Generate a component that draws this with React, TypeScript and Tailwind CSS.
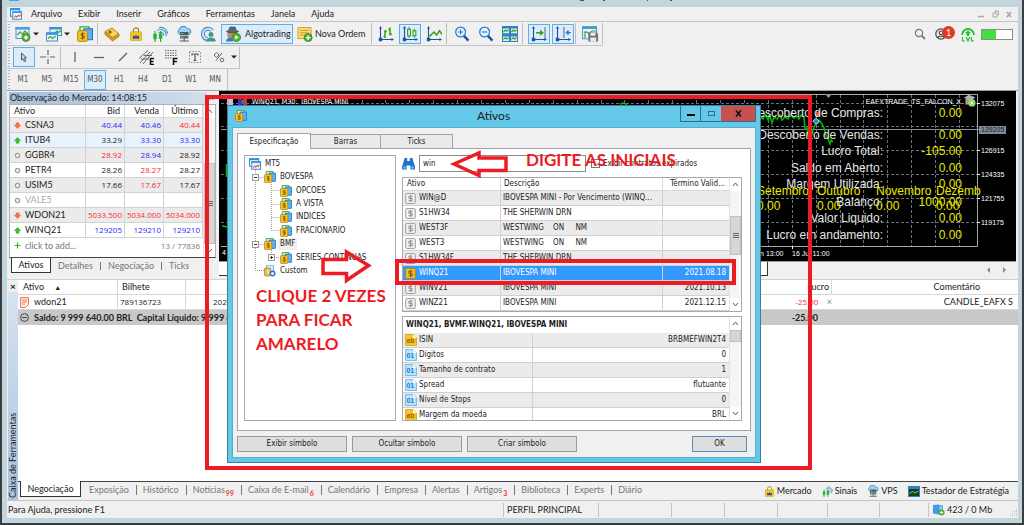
import React from "react";

type P = { children?: React.ReactNode; size?: string };

function Svg({ children, size }: P) {
  return (
    <svg viewBox="0 0 16 16" className={size ?? "size-4 shrink-0"} fill="none" aria-hidden="true">
      {children}
    </svg>
  );
}

/* ---------- icons ---------- */

const AppIcon = ({ size }: P) => (
  <Svg size={size}>
    <rect x="0.7" y="1" width="12" height="10" fill="#fff" stroke="#2f8fdc" strokeWidth="1.4" />
    <rect x="0" y="0.4" width="13.4" height="2.6" fill="#2f8fdc" />
    <rect x="3.7" y="5" width="11.6" height="10" fill="#fff" stroke="#2f8fdc" strokeWidth="1.4" />
    <rect x="3" y="4.4" width="13" height="2.4" fill="#3b9ae4" />
    <path d="M5.5 13l2-2.6 1.6 1.8 2-2.4 1.4 1.4 1.4-2.4" stroke="#ef5a3c" strokeWidth="1.5" />
  </Svg>
);
const Plus = ({ x, y }: { x: number; y: number }) => (
  <g>
    <circle cx={x} cy={y} r="4" fill="#4fae2c" stroke="#2f7d17" strokeWidth="0.7" />
    <path d={`M${x - 2.3} ${y}h4.6M${x} ${y - 2.3}v4.6`} stroke="#fff" strokeWidth="1.4" />
  </g>
);
const ChartPlus = () => (
  <Svg>
    <rect x="1" y="1.5" width="13" height="11" fill="#e3f1fc" stroke="#4a9ade" />
    <rect x="0.5" y="1" width="14" height="2.6" fill="#4a9ade" />
    <path d="M2 9l3-3 2.4 2L10 5l3 3" stroke="#5ba843" strokeWidth="1.3" />
    <Plus x={11} y={11.5} />
  </Svg>
);
const Windows = () => (
  <Svg>
    <rect x="4" y="1.5" width="11.5" height="8" fill="#dceefb" stroke="#3d8fd8" />
    <rect x="3.5" y="1" width="12.5" height="2.4" fill="#3d8fd8" />
    <path d="M9 7l2-2 1.5 1.5L15 4.6" stroke="#4fa23a" strokeWidth="1.2" />
    <rect x="0.5" y="7" width="11" height="8" fill="#e5f3fc" stroke="#3d8fd8" />
    <rect x="0" y="6.4" width="12" height="2.4" fill="#3d8fd8" />
    <path d="M2 12.5l2.5-2 2 2L10 10" stroke="#4fa23a" strokeWidth="1.3" />
  </Svg>
);
const Coins = ({ size }: P) => (
  <Svg size={size}>
    <rect x="3" y="0.8" width="9" height="10" fill="#e9f7df" stroke="#4fa83a" strokeWidth="1.3" />
    <rect x="6.5" y="2.8" width="9" height="11" rx="0.6" fill="#5bb1f0" stroke="#1f71c4" strokeWidth="1.1" />
    <rect x="0.7" y="4.7" width="9.6" height="10.6" rx="1" fill="#f5c62f" stroke="#b98408" />
    <path d="M7.6 7.6H4.4v2.2h2.8v2.4H3.6M5.6 6.3v7.4" stroke="#7d5800" strokeWidth="1" />
  </Svg>
);
const CustomIcon = ({ size }: P) => (
  <Svg size={size}>
    <rect x="3.5" y="0.8" width="9" height="9" fill="#dbeefc" stroke="#62a9dd" />
    <rect x="0.7" y="4" width="8" height="10.6" rx="1" fill="#e5bd55" stroke="#a9812a" />
    <path d="M5.5 6.2v6M4 8h3M4 10.4h3" stroke="#fff3c4" />
    <circle cx="11.4" cy="11.2" r="3" fill="#fff" stroke="#3272c8" strokeWidth="2" />
  </Svg>
);
const Tag = () => (
  <Svg>
    <path d="M1 5.5L8 2l7 6-6.500 4z" fill="#f5cd52" stroke="#b98a17" />
    <path d="M1 5.500v3L8.500 15l6.500-4.500V8l-6.500 4z" fill="#dd9f24" stroke="#a87513" strokeWidth="0.8" />
    <circle cx="6" cy="6" r="1.6" fill="#7c5a0c" />
    <path d="M7.600 8.600l3.400-2" stroke="#fff2b8" />
  </Svg>
);
const Bag = ({ size }: P) => (
  <Svg size={size}>
    <path d="M5 6V4a3 3 0 016 0v2" stroke="#9b8331" strokeWidth="1.3" />
    <rect x="1.8" y="5.4" width="12.4" height="10" rx="0.8" fill="#f8c521" stroke="#c89a12" strokeWidth="0.7" />
    <path d="M4.5 13.4V9.2l2 1.6 1.5-2 1.5 2 2-1.6v4.2z" fill="#2456a8" />
  </Svg>
);
const Signal = ({ size }: P) => (
  <Svg size={size}>
    <path d="M5 4.6a5.6 5.6 0 019 5.6M7 1.6a7 7 0 018.6 6M6.6 7a3 3 0 015 2.6" stroke="#3f95da" strokeWidth="1.1" />
    <path d="M3 5v11M8.6 5v11" stroke="#23962a" />
    <rect x="1.2" y="7.4" width="3.6" height="6" rx="1" fill="#2cb634" />
    <rect x="6.8" y="7.4" width="3.6" height="5.6" rx="1" fill="#2cb634" />
  </Svg>
);
const Cloud = ({ size }: P) => (
  <Svg size={size}>
    <path d="M3.6 8.4A3 3 0 013 3.6 4.6 4.6 0 0111.4 2.6a3 3 0 011.4 5.8z" fill="#9fd1f5" stroke="#3584c9" />
    <rect x="4" y="6" width="8.4" height="3" fill="#4d5a5f" />
    <rect x="4" y="9.6" width="8.4" height="3" fill="#5e6d70" />
    <path d="M5.2 7.5h2M5.2 11.1h2" stroke="#6ee06a" />
    <path d="M8.2 12.6v2M3.6 15h9.2" stroke="#4d5a5f" strokeWidth="1.2" />
  </Svg>
);
const Community = () => (
  <Svg>
    <path d="M7.6 14.6A6.6 6.6 0 1113.4 4M7.6 11.6A3.8 3.8 0 1111 5.4" stroke="#3f95da" strokeWidth="1.2" />
    <circle cx="11" cy="8.4" r="2.5" fill="#3c9a94" />
    <path d="M6.2 15.6c0-3 2-4.2 4.8-4.2s4.8 1.2 4.8 4.2z" fill="#3c9a94" />
  </Svg>
);
const Algo = ({ size }: P) => (
  <Svg size={size}>
    <path d="M2.400 7c0-1.500 1-2 4.400-2s5 .5 5 2v3.800c-1.600 2.200-7.600 2.200-9.400 0z" fill="#b58f6c" />
    <path d="M3.600 4.600L4.800 1h5.400l1.200 3.600 2.400.8c-1.600 1.800-10.800 1.800-12.600 0z" fill="#5d666b" stroke="#30373b" strokeWidth="0.5" />
    <path d="M1 15.400c.6-2.800 2.200-3.800 5.400-3.800l2 3.800z" fill="#3a78bd" />
    <circle cx="11.4" cy="11.4" r="4.2" fill="#52b72c" stroke="#2b7d12" strokeWidth="0.7" />
    <path d="M10.2 9.2v4.4l3.4-2.2z" fill="#fff" />
  </Svg>
);
const Note = () => (
  <Svg>
    <path d="M1 1.6h13v8l-3 3H1z" fill="#fae07c" stroke="#c9a12c" />
    <path d="M3 4.4h9M3 6.8h9M3 9.2h5" stroke="#c79c27" />
    <Plus x={11.2} y={11.6} />
  </Svg>
);
const Axes = () => (
  <>
    <path d="M2.5 1v13M1 13.5h13.4" stroke="#1c4fa8" strokeWidth="1.1" />
    <path d="M2.5 0L4 2.6H1zM16 13.5l-2.6 1.6v-3.2zM.8 11.8h3.4v3.4H.8z" fill="#1c4fa8" />
  </>
);
const Bars = () => (
  <Svg>
    <Axes />
    <path d="M7 4v8M5.4 10.4H7M7 5.4h2M12 1.6v8M10.2 3.4H12M12 8h2" stroke="#35a11b" strokeWidth="1.5" />
  </Svg>
);
const Candles = () => (
  <Svg>
    <Axes />
    <path d="M7 1v11M12.4 2.6v9" stroke="#35a11b" />
    <rect x="5.6" y="3.2" width="2.8" height="6.6" fill="#dff0ff" stroke="#35a11b" strokeWidth="1.1" />
    <rect x="11" y="4.8" width="2.8" height="5" fill="#dff0ff" stroke="#35a11b" strokeWidth="1.1" />
  </Svg>
);
const LineChart = () => (
  <Svg>
    <Axes />
    <path d="M3.5 10.4L8 6l2.6 3 3-4.4L16 8.6" stroke="#35a11b" strokeWidth="1.5" />
  </Svg>
);
const Zoom = ({ plus }: { plus?: boolean }) => (
  <Svg>
    <path d="M9.6 9.4l4.8 5.2" stroke="#1d4da0" strokeWidth="2.4" />
    <circle cx="6.6" cy="6" r="4.9" fill="#e4f2fd" stroke="#2b7ed2" strokeWidth="1.3" />
    <path d={plus ? "M4 6h5.2M6.6 3.4v5.2" : "M4 6h5.2"} stroke="#2b7ed2" strokeWidth="1.2" />
  </Svg>
);
const Tile = () => (
  <Svg>
    <rect width="16" height="16" fill="#2f82d0" />
    <path d="M1 2.6h6v4.6H1zM9 2.6h6v4.6H9zM1 10.4h6V15H1zM9 10.4h6V15H9z" fill="#dff3d4" />
    <path d="M1.4 6l2-2 1.4 1.2L6.6 4M9.4 6l2-2 1.4 1.2L14.6 4M1.4 13.4l2-1.6 1.4 1.2 1.8-1.2M9.4 13.4l2-1.6 1.4 1.2 1.8-1.2" stroke="#35982a" strokeWidth="1.1" />
  </Svg>
);
const AutoScroll = () => (
  <Svg>
    <Axes />
    <path d="M14 1v12" stroke="#5b6b78" />
    <path d="M5 6.8h5" stroke="#35a11b" strokeWidth="1.6" />
    <path d="M9 3.8l4 3-4 3z" fill="#35a11b" />
  </Svg>
);
const Shift = () => (
  <Svg>
    <Axes />
    <path d="M9 1v11" stroke="#5b6b78" />
    <path d="M12.6 6.6H16M13 4.4v4.4" stroke="#2b7ed2" strokeWidth="1.3" />
    <path d="M10.4 6.6l3-2.6v5.2z" fill="#2b7ed2" />
  </Svg>
);
const Template = () => (
  <Svg>
    <rect x="0.6" y="0.8" width="14" height="12" fill="#e6f3fc" stroke="#4a96d4" />
    <rect x="0.6" y="0.4" width="14.4" height="2.6" fill="#4a96d4" />
    <path d="M3 12V5M2 7l3-1 2 2 3-3 4 0" stroke="#4fa23a" strokeWidth="1.2" />
    <path d="M6.4 6.4h8L16 8v7.6H6.4z" fill="#6b7277" />
    <path d="M8.4 6.8h5v3h-5zM8.2 11.6h6v4h-6z" fill="#e9ecee" />
  </Svg>
);
const Caret = () => (
  <svg viewBox="0 0 6 4" className="h-1 w-1.5 shrink-0" aria-hidden="true">
    <path d="M0 .4h6L3 3.6z" fill="#222" />
  </svg>
);
const Dollar = ({ on }: { on?: boolean }) => (
  <Svg size="size-[11px] shrink-0">
    <rect x="1" y="0.8" width="14" height="14.4" rx="1.4" fill={on ? "#f5c02c" : "#f1f1f1"} stroke={on ? "#b8860b" : "#9a9a9a"} strokeWidth="1.4" />
    <path d="M11 4.6H5.6v3.2h5v3.4H5M8.2 2.8v10.4" stroke={on ? "#6f4e00" : "#8b8b8b"} strokeWidth="1.3" />
  </Svg>
);
const Binoculars = () => (
  <svg viewBox="0 0 13 13" className="h-[13px] w-[13px] shrink-0" aria-hidden="true">
    <path d="M2.600 1h2.600v3h2.600V1h2.600l.8 3L13 9.600V12.500H8.400V8.400H4.600v4.100H0V9.600L1.800 4z" fill="#1f74c6" />
    <path d="M1.400 9.600h2v2h-2zM9.600 9.600h2v2h-2z" fill="#8ac8f5" />
  </svg>
);
const FileTag = ({ text }: { text: "ab" | "01" }) => (
  <svg viewBox="0 0 13 13" className="h-3 w-3 shrink-0" aria-hidden="true">
    <path d="M.6.6h8.2l3.6 3.6v8.2H.6z" fill={text === "ab" ? "#f7c52b" : "#bfe3fa"} stroke={text === "ab" ? "#dba917" : "#6ab7ec"} />
    <path d="M8.8.6v3.6h3.6z" fill="#fff" />
    <text x="1.6" y="9.6" fontSize="7.5" fontWeight="700" fontFamily="Liberation Sans, sans-serif" fill={text === "ab" ? "#9a6a00" : "#1c7fd0"}>
      {text}
    </text>
  </svg>
);
const Arrow = ({ kind }: { kind: "up" | "down" | "none" }) => (
  <svg viewBox="0 0 8 8" className="mx-1 size-[7px] shrink-0" aria-hidden="true">
    {kind === "up" && <path d="M4 .5l3.500 3.700H5.600V7H2.400V4.200H.5z" fill="#3cc428" stroke="#26a312" strokeWidth="0.6" />}
    {kind === "down" && <path d="M4 7.500l3.500-3.700H5.600V1H2.400v2.800H.5z" fill="#f7734c" stroke="#e8502a" strokeWidth="0.6" />}
    {kind === "none" && <circle cx="4" cy="4" r="2.4" fill="#fff" stroke="#9a9a9a" strokeWidth="1.4" />}
  </svg>
);

/* ---------- toolbars ---------- */

const Sep = ({ cls }: { cls?: string }) => <div className={`h-[21px] w-px shrink-0 bg-[#bdbdbd] ${cls ?? ""}`} />;

const Grip = ({ cls }: { cls?: string }) => (
  <svg className={`h-[19px] w-1 shrink-0 ${cls ?? ""}`} aria-hidden="true">
    <path d="M2 0v19" stroke="#b4b4b4" strokeWidth="2" strokeDasharray="1 2" />
  </svg>
);

function Tool({ label, active, children }: { label: string; active?: boolean; children: React.ReactNode }) {
  return (
    <button
      aria-label={label}
      className={
        active
          ? "mx-px flex h-5 w-[22px] shrink-0 items-center justify-center border border-[#5bb0e8] bg-[#dcecfa]"
          : "mx-px flex h-5 w-[22px] shrink-0 items-center justify-center"
      }
    >
      {children}
    </button>
  );
}

function MenuBar() {
  const items = ["Arquivo", "Exibir", "Inserir", "Gráficos", "Ferramentas", "Janela", "Ajuda"];
  return (
    <nav className="flex h-[15px] items-center border-b border-[#c4c4c4] pr-[6px] pl-[3px]">
      <AppIcon size="size-3" />
      <div className="ml-[9px] flex flex-1 gap-4">
        {items.map((i) => (
          <button key={i}>{i}</button>
        ))}
      </div>
      <svg viewBox="0 0 34 8" className="h-2 w-[34px]" fill="none" stroke="#a9a9a9" aria-hidden="true">
        <path d="M0 6.500h6" strokeWidth="1.500" />
        <path d="M15 3h4v4h-4zM17 3V1h3.500v4H19" />
        <path d="M29 2l4 5M33 2l-4 5" strokeWidth="1.6" />
      </svg>
    </nav>
  );
}

function MainToolbar() {
  return (
    <div className="flex h-6 items-center pr-[5px]">
      <div className="flex h-full items-center border-b border-[#c4c4c4]">
        <Grip />
        <button aria-label="Novo gráfico" className="flex w-[31px] items-center gap-0.5 pl-1">
          <ChartPlus />
          <Caret />
        </button>
        <button aria-label="Perfis" className="flex w-[31px] items-center gap-0.5 pl-1">
          <Windows />
          <Caret />
        </button>
        <Tool label="Símbolos"><Coins /></Tool>
        <Sep cls="mr-0.5" />
        <Tool label="Editor"><Tag /></Tool>
        <Tool label="Mercado"><Bag size="size-3.5 shrink-0" /></Tool>
        <Tool label="Sinais"><Signal /></Tool>
        <Tool label="VPS"><Cloud /></Tool>
        <Tool label="Comunidade"><Community /></Tool>
        <button className="ml-px flex h-5 w-[72px] items-center gap-1 border border-[#5bb0e8] bg-[#dcecfa] pl-[3px]">
          <Algo />
          Algotrading
        </button>
        <button className="flex h-5 w-[76px] items-center gap-0.5 pl-1">
          <Note />
          Nova Ordem
        </button>
        <Sep cls="mx-0.5" />
        <Tool label="Barras"><Bars /></Tool>
        <Tool label="Candles" active><Candles /></Tool>
        <Tool label="Linha"><LineChart /></Tool>
        <Sep cls="mr-[3px]" />
        <Tool label="Mais zoom"><Zoom plus /></Tool>
        <Tool label="Menos zoom"><Zoom /></Tool>
        <Tool label="Lado a lado"><Tile /></Tool>
        <Sep cls="mr-1" />
        <Tool label="Rolagem automática" active><AutoScroll /></Tool>
        <Tool label="Deslocamento" active><Shift /></Tool>
        <Sep cls="mr-0.5" />
        <Tool label="Modelos"><Template /></Tool>
        <Sep />
      </div>
      <div className="ml-auto flex items-center">
        <svg viewBox="0 0 12 12" className="size-3" fill="none" stroke="#777" aria-hidden="true">
          <circle cx="5" cy="5" r="3.6" strokeWidth="1.2" />
          <path d="M7.6 7.6l3.4 3.4" strokeWidth="1.8" />
        </svg>
        <div className="relative ml-[9px] h-3 w-[19px]">
          <svg viewBox="0 0 12 12" className="size-3" fill="none" stroke="#444" aria-hidden="true">
            <circle cx="6" cy="6" r="5.2" strokeWidth="1.2" />
            <circle cx="6" cy="4.8" r="1.8" strokeWidth="1.2" />
            <path d="M2.8 10c.4-2.4 6-2.4 6.4 0" strokeWidth="1.2" />
          </svg>
          <span className="absolute -top-[2px] left-[7px] flex size-[13px] items-center justify-center rounded-full bg-[#e23a22] text-[9px] text-white">1</span>
        </div>
        <svg viewBox="0 0 14 15" className="mr-[6px] ml-[7px] h-[15px] w-[14px]" fill="none" aria-hidden="true">
          <path d="M1 8a6 6 0 1112 0" stroke="#22c32a" strokeWidth="1.800" />
          <path d="M7 3.600l2.600 2.200L8 7.500v1.500H6V7.500L4.400 5.800z" fill="#22c32a" />
          <path d="M1.500 10v4H4M5.200 10L7 14l1.800-4M10.500 10v4H13" stroke="#22c32a" strokeWidth="1.200" />
        </svg>
        <div className="h-[11px] w-8 border border-[#8b8b8b] bg-white">
          <div className="h-full w-[14px] bg-[#41e23f]" />
        </div>
      </div>
    </div>
  );
}

function DrawToolbar() {
  const g = "#666";
  return (
    <div className="flex h-[23px]">
      <div className="flex h-full items-center border-b border-[#c4c4c4]">
        <Grip cls="mr-px" />
        <Tool label="Cursor" active>
          <Svg>
            <path d="M5.500 4l5 4.800-2.200.2 1.400 3-1.400.7-1.400-3-1.400 1.300z" fill="#cfd6dc" stroke="#555" />
          </Svg>
        </Tool>
        <Tool label="Mira">
          <Svg>
            <path d="M8 1v5M8 10v5M0 8h6M10 8h5M7.500 8h1" stroke={g} strokeWidth="1.200" />
          </Svg>
        </Tool>
        <Sep cls="mr-0.5" />
        <Tool label="Linha vertical"><Svg><path d="M8 3v10" stroke={g} strokeWidth="1.300" /></Svg></Tool>
        <Tool label="Linha horizontal"><Svg><path d="M3 8.500h10" stroke={g} strokeWidth="1.300" /></Svg></Tool>
        <Tool label="Linha de tendência"><Svg><path d="M4 12l8-8" stroke={g} strokeWidth="1.400" /></Svg></Tool>
        <Tool label="Canal">
          <Svg>
            <path d="M1 14L11 3M4 15L14 3M0 9.500L9 1.500M2 10h8M5 6.500h8" stroke={g} />
            <path d="M15 9.500h-3.500v6H15M11.500 12.400h3" stroke="#111" strokeWidth="1.500" />
          </Svg>
        </Tool>
        <Tool label="Fibonacci">
          <Svg>
            <path d="M2 1.500h12M2 4h12M2 6.500h12M2 9h7" stroke={g} strokeDasharray="1.500 1" />
            <path d="M14.500 9.500h-4V16M10.500 12.400h3.500" stroke="#111" strokeWidth="1.500" />
          </Svg>
        </Tool>
        <Tool label="Texto">
          <Svg>
            <rect x="2.500" y="2.500" width="11" height="11" stroke="#888" strokeDasharray="1.500 1.500" />
            <path d="M5 6.400V5h6v1.400M8 5v6.500M6.500 11.500h3" stroke="#555" strokeWidth="1.200" />
          </Svg>
        </Tool>
        <Tool label="Objetos">
          <Svg>
            <path d="M3 6l2.500-2.500L8 6 5.500 8.500z" stroke={g} />
            <circle cx="11" cy="11" r="1.800" stroke={g} />
            <path d="M5 11.500l6-7.500" stroke={g} />
          </Svg>
        </Tool>
        <Caret />
        <Sep cls="ml-0.5" />
      </div>
    </div>
  );
}

function TimeToolbar() {
  const frames = ["M1", "M5", "M15", "M30", "H1", "H4", "D1", "W1", "MN"];
  return (
    <div className="flex h-[21px] text-[#555]">
      <div className="flex h-full items-center font-[DejaVu_Sans_Condensed,sans-serif] text-[8px]">
        <Grip />
        {frames.map((f) => (
          <button
            key={f}
            className={
              f === "M30"
                ? "mx-px h-5 w-[22px] border border-[#5bb0e8] bg-[#dcecfa]"
                : "mx-px h-5 w-[22px]"
            }
          >
            {f}
          </button>
        ))}
        <Sep />
      </div>
    </div>
  );
}

/* ---------- scroll bar ---------- */

function ScrollBar({ before, thumb, grip }: { before: string; thumb: string; grip?: boolean }) {
  return (
    <div className="flex w-3 shrink-0 flex-col items-center border-l border-[#e2e2e2] bg-[#f5f5f5]" aria-hidden="true">
      <svg viewBox="0 0 11 13" className="h-[13px] w-[11px] bg-white" fill="none">
        <path d="M3 8l2.500-3L8 8" stroke="#555" />
      </svg>
      <div className={before} />
      <div className={`flex w-full items-center justify-center border border-[#c0c0c0] bg-[#d6d6d6] ${thumb}`}>
        {grip && (
          <svg viewBox="0 0 6 6" className="size-1.5" stroke="#666">
            <path d="M0 .5h6M0 2.500h6M0 4.500h6" />
          </svg>
        )}
      </div>
      <svg viewBox="0 0 11 13" className="mt-auto h-[13px] w-[11px] bg-white" fill="none">
        <path d="M3 5l2.500 3L8 5" stroke="#555" />
      </svg>
    </div>
  );
}

/* ---------- market watch ---------- */

type Kind = "up" | "down" | "none";
const B = "text-[#2a2aff]";
const R = "text-[#ff2a2a]";
const K = "text-[#222]";
const quotes: { s: string; k: Kind; v: [string, string][]; bg: string; dim?: boolean }[] = [
  { s: "CSNA3", k: "down", v: [["40.44", B], ["40.46", B], ["40.44", R]], bg: "bg-[#ebebeb]" },
  { s: "ITUB4", k: "up", v: [["33.29", K], ["33.30", B], ["33.30", B]], bg: "bg-[#e8f2fd]" },
  { s: "GGBR4", k: "none", v: [["28.92", R], ["28.94", B], ["28.92", K]], bg: "bg-[#ebebeb]" },
  { s: "PETR4", k: "none", v: [["28.26", K], ["28.27", R], ["28.27", K]], bg: "bg-white" },
  { s: "USIM5", k: "none", v: [["17.66", K], ["17.67", R], ["17.67", K]], bg: "bg-[#ebebeb]" },
  { s: "VALE5", k: "none", v: [["", K], ["", K], ["", K]], bg: "bg-white", dim: true },
  { s: "WDON21", k: "down", v: [["5033.500", R], ["5034.000", R], ["5034.000", R]], bg: "bg-[#ebebeb]" },
  { s: "WINQ21", k: "up", v: [["129205", B], ["129210", B], ["129210", B]], bg: "bg-white" },
];

function MarketWatch() {
  return (
    <section className="flex w-[212px] shrink-0 flex-col pr-[3px] pl-[2px]">
      <header className="mt-px flex h-3 items-center bg-gradient-to-r from-[#a3bedd] to-[#d3e0ee] pl-px">
        <span className="flex-1">Observação do Mercado: 14:08:15</span>
        <button aria-label="Fechar" className="bg-[#f0f0f0] px-0.5 leading-3">×</button>
      </header>
      <div className="flex h-[154px] border border-[#b0b0b0] border-b-[#444] bg-white">
        <div className="flex-1">
          <table className="w-full table-fixed border-separate border-spacing-0">
            <colgroup>
              <col />
              <col className="w-[39px]" />
              <col className="w-[39px]" />
              <col className="w-[39px]" />
            </colgroup>
            <thead>
              <tr className="h-[13px] leading-3">
                <th className="border-r border-b border-[#d8d8d8] p-0 pl-1 text-left font-normal">Ativo</th>
                {["Bid", "Venda", "Último"].map((h) => (
                  <th key={h} className="border-r border-b border-[#d8d8d8] p-0 pr-1 text-right font-normal">{h}</th>
                ))}
              </tr>
            </thead>
            <tbody>
              {quotes.map((q) => (
                <tr key={q.s} className={`h-[15px] leading-[14px] ${q.bg}`}>
                  <td className="border-r border-b border-[#d2d2d2] p-0">
                    <span className={q.dim ? "flex items-center text-[#aaa]" : "flex items-center"}>
                      <Arrow kind={q.k} />
                      {q.s}
                    </span>
                  </td>
                  {q.v.map(([t, c], i) => (
                    <td key={i} className={`border-r border-b border-[#d2d2d2] p-0 pr-0.5 text-right font-[Open_Sans,sans-serif] text-[8px] ${c}`}>{t}</td>
                  ))}
                </tr>
              ))}
            </tbody>
          </table>
          <div className="flex h-[15px] items-center pr-[3px] text-[#777]">
            <svg viewBox="0 0 8 8" className="mx-1 size-[7px]" aria-hidden="true">
              <path d="M4 .6v6.800M.6 4h6.800" stroke="#35b31f" strokeWidth="1.400" />
            </svg>
            <button className="flex-1 text-left">click to add...</button>
            <span className="font-[Open_Sans,sans-serif] text-[8px]">13 / 77836</span>
          </div>
        </div>
        <ScrollBar before="h-[46px]" thumb="h-[82px]" grip />
      </div>
      <div className="flex h-[15px] items-center text-[#777]">
        <button className="-mt-px ml-0.5 h-[15px] w-10 border border-t-0 border-[#333] bg-white text-[#222]">Ativos</button>
        <button className="ml-[7px]">Detalhes</button>
        <i className="mx-[7px] h-2 w-px bg-[#777]" />
        <button>Negociação</button>
        <i className="mx-[7px] h-2 w-px bg-[#777]" />
        <button>Ticks</button>
      </div>
    </section>
  );
}

/* ---------- chart ---------- */

const cols = Array.from({ length: 31 }, (_, i) => Math.round(959 - i * 23.9));
const rows = [104, 127, 151, 175, 199, 223];
const prices: [number, string][] = [[104, "132075"], [151, "126915"], [175, "124335"], [199, "121755"], [223, "119175"]];
const info: [number, string, string][] = [
  [117, "Descoberto de Compras:", "0.00"],
  [139, "Descoberto de Vendas:", "0.00"],
  [155, "Lucro Total:", "-105.00"],
  [172, "Saldo em Aberto:", "0.00"],
  [188, "Margem Utilizada:", "0.00"],
  [206, "Balanço:", "1000.00"],
  [222, "Valor Liquido:", "0.00"],
  [239, "Lucro em andamento:", "0.00"],
];
const months: [number, string][] = [[757, "Setembro"], [817, "Outubro"], [876, "Novembro"], [936, "Dezemb"]];

function Chart() {
  return (
    <section className="flex min-w-0 flex-1 flex-col pr-[2px]">
      <div className="relative h-[170px] overflow-hidden bg-black">
        <svg viewBox="219 91 797 170" className="absolute top-0 right-0 h-[170px] w-[797px]" fill="none" fontFamily="Liberation Sans, sans-serif">
          <path d="M221 94.500H977.500V246.500H221" stroke="#a8a8a8" />
          <g stroke="#66727e" strokeDasharray="3 2">
            {cols.map((x) => <path key={x} d={`M${x + 0.5} 95V246`} />)}
            {rows.map((y) => <path key={y} d={`M221 ${y - 0.5}H977`} />)}
          </g>
          <path d="M221 129.500H980" stroke="#8494a4" />
          <path d="M226.500 164v13M222 226l6 1M620 104l4-1 3 2" stroke="#00c400" strokeWidth="1.500" />
          <path
            d="M760 116l3 3 2-5 3 6 2-4 2 7 2-6 3 2 3-4 2 5 3-3 3 2 3-4 3 3 2-2 3 3 2-4 3 2 1 12 2-1 1 6 2-3 2 3 2-7 2-3 2-1 1-3 3 4 2 4 2 7 2 4 2 5 1-4 2 2"
            stroke="#00b400"
            strokeWidth="1.600"
          />
          <circle cx="818" cy="114" r="2.200" fill="#f4532f" />
          <path d="M816 118l3.200 3.200-3.200 3.200-3.200-3.200z" fill="#2f7be0" stroke="#fff" strokeWidth="0.700" />
          <path d="M825 94h7l-3.500 4z" fill="#8494a4" />
          <g fontSize="7" fill="#fff">
            <text x="252" y="104" fontFamily="DejaVu Sans Condensed, sans-serif">WINQ21, M30: &nbsp;IBOVESPA MINI</text>
            <text x="961" y="104" textAnchor="end">EAFXTRADE_TS_FALCON_X</text>
            {prices.map(([y, t]) => (
              <g key={t}>
                <path d={`M977 ${y - 0.5}h3`} stroke="#fff" />
                <text x="981" y={y + 2}>{t}</text>
              </g>
            ))}
            <path d="M792.500 246v3" stroke="#fff" />
            <text x="743" y="256">16 Jun 13:00</text>
            <text x="792" y="256">16 Jul 11:00</text>
            <text x="222" y="255">4</text>
          </g>
          <rect x="979" y="126" width="27" height="8" fill="#7b8b9d" />
          <text x="981" y="132" fontSize="7" fill="#1a1a1a">129205</text>
          <g fontSize="12">
            {info.map(([y, l, v]) => (
              <g key={l}>
                <text x="883" y={y} textAnchor="end" fill="#e6e6e6">{l}</text>
                <text x="962" y={y} textAnchor="end" fill="#e8e800">{v}</text>
              </g>
            ))}
            {months.map(([x, t]) => (
              <g key={t} fill="#e8e800">
                <text x={x} y="195">{t}</text>
                <text x={x} y="210">0.00</text>
              </g>
            ))}
          </g>
          <path d="M977.500 180v32" stroke="#a8a8a8" />
          <path d="M227 97h5v8h-5z" fill="#e9a0a0" />
          <path d="M229 97h4v8h-4z" fill="#b9c4ee" />
          <path d="M238 97h4v8h-4z" fill="#2a3cc8" />
          <path d="M243 97h4v8h-4z" fill="#c43a3a" />
          <svg x="963" y="94" width="13" height="13" viewBox="0 0 16 16">
            <path d="M3 6h8v7H3z" fill="#b99a7a" />
            <path d="M1 5l6-4 8 3-4 4z" fill="#a9b4ba" />
            <circle cx="11" cy="11" r="4.500" fill="#8fdc74" />
            <path d="M9.800 9v4.200l3.200-2.100z" fill="#fff" />
          </svg>
        </svg>
      </div>
      <div className="flex h-[18px] items-start border-t border-[#999] pr-2">
        <div className="h-3.5 w-[549px] border-r border-b border-[#333] bg-white" />
        <svg viewBox="0 0 22 8" className="mt-1 ml-auto h-2 w-[22px]" fill="#8a8a8a" aria-hidden="true">
          <path d="M4 1v6L1 4zM17 1v6l3-3z" />
        </svg>
      </div>
    </section>
  );
}

/* ---------- toolbox ---------- */

const boxTabs: [string, string?][] = [
  ["Exposição"], ["Histórico"], ["Notícias", "99"], ["Caixa de E-mail", "6"], ["Calendário"],
  ["Empresa"], ["Alertas"], ["Artigos", "3"], ["Biblioteca"], ["Experts"], ["Diário"],
];

function Toolbox() {
  return (
    <section className="flex flex-1 border-t border-[#d0d0d0]">
      <aside className="flex w-[11px] shrink-0 flex-col items-center pl-px">
        <button aria-label="Fechar caixa" className="h-3 text-[10px] leading-[11px] font-bold">×</button>
        <div className="flex w-[10px] flex-1 rotate-180 items-center bg-gradient-to-b from-[#a9c2de] to-[#d7e3ef] leading-[10px] [writing-mode:vertical-rl]">
          <span className="pt-0.5">Caixa de Ferramentas</span>
        </div>
      </aside>
      <div className="flex min-w-0 flex-1 flex-col">
        <div className="flex-1 border-b border-[#444] bg-white">
          <table className="w-full table-fixed border-separate border-spacing-0">
            <colgroup>
              <col className="w-[100px]" />
              <col className="w-[68px]" />
              <col className="w-[80px]" />
              <col />
              <col className="w-[80px]" />
              <col className="w-[186px]" />
            </colgroup>
            <thead>
              <tr className="h-[15px] leading-[14px]">
                <th className="border-r border-b border-[#d8d8d8] p-0 pl-[5px] text-left font-normal">
                  Ativo <span className="ml-2 text-[7px]">▲</span>
                </th>
                <th className="border-r border-b border-[#d8d8d8] p-0 pl-1 text-left font-normal">Bilhete</th>
                <th className="border-b border-[#d8d8d8] p-0 text-right font-normal">Horário</th>
                <th className="border-b border-[#d8d8d8] p-0" />
                <th className="border-r border-b border-[#d8d8d8] p-0 pr-0.5 text-right font-normal">Lucro</th>
                <th className="border-b border-[#d8d8d8] p-0 pr-[38px] text-right font-normal">Comentário</th>
              </tr>
            </thead>
            <tbody>
              <tr className="h-[15px] leading-[14px]">
                <td className="border-r border-b border-[#d8d8d8] p-0">
                  <span className="flex items-center gap-[5px] pl-0.5">
                    <svg viewBox="0 0 9 11" className="h-[11px] w-[9px]" fill="none" aria-hidden="true">
                      <path d="M.6.600h7.800v7L5.600 10.400H.600z" fill="#fff2ee" stroke="#ef6a4c" />
                      <path d="M2.200 3h4.600M2.200 5h4.600M2.200 7h2.600" stroke="#ef6a4c" />
                    </svg>
                    wdon21
                  </span>
                </td>
                <td className="border-r border-b border-[#d8d8d8] p-0 pl-0.5 font-[Open_Sans,sans-serif] text-[8px]">789136723</td>
                <td className="border-b border-[#d8d8d8] p-0 pl-[27px] font-[Open_Sans,sans-serif] text-[8px]">2021.06</td>
                <td className="border-b border-[#d8d8d8] p-0" />
                <td className="border-b border-[#d8d8d8] p-0 text-right whitespace-nowrap text-[#ff2a2a]">
                  <span className="font-[Open_Sans,sans-serif] text-[8px]">-25.00</span> <span className="ml-1.5 text-[#888]">×</span>
                </td>
                <td className="border-b border-[#d8d8d8] p-0 pr-[5px] text-right">CANDLE_EAFX S</td>
              </tr>
              <tr className="h-[15px] bg-[#c8c8c8] leading-[15px] font-bold">
                <td colSpan={4} className="p-0">
                  <span className="flex items-center gap-[5px] pl-0.5">
                    <svg viewBox="0 0 9 9" className="size-[9px]" fill="none" stroke="#444" aria-hidden="true">
                      <circle cx="4.500" cy="4.500" r="3.900" />
                      <path d="M2.200 4.500h4.600" />
                    </svg>
                    <span>Saldo: 9 999 640.00 BRL &nbsp;Capital Líquido: 9 999 615.00</span>
                  </span>
                </td>
                <td className="p-0 pr-[14px] text-right">-25.00</td>
                <td className="p-0" />
              </tr>
            </tbody>
          </table>
        </div>
        <div className="flex h-[18px] items-start text-[#777]">
          <button className="-mt-px ml-0.5 h-4 w-[61px] border border-t-0 border-[#333] bg-white text-[#222]">Negociação</button>
          <div className="ml-2 flex h-[15px] flex-1 items-center">
            {boxTabs.map(([t, n], i) => (
              <React.Fragment key={t}>
                {i > 0 && <i className="mr-1.5 ml-[7px] h-2.5 w-px bg-[#777]" />}
                <button>
                  {t}
                  {n && <sub className="bottom-[-3px] ml-px text-[7px] font-bold text-[#f03030]">{n}</sub>}
                </button>
              </React.Fragment>
            ))}
          </div>
          <div className="flex h-[18px] items-center gap-[10px] pr-[9px] text-[#222]">
            <button className="flex items-center gap-0.5"><Bag size="size-[11px]" />Mercado</button>
            <button className="flex items-center gap-0.5"><Signal size="size-[11px]" />Sinais</button>
            <button className="flex items-center gap-0.5"><Cloud size="size-[12px]" />VPS</button>
            <button className="flex items-center gap-0.5">
              <svg viewBox="0 0 12 11" className="h-[11px] w-3" aria-hidden="true">
                <path d="M0 0h12v11H0z" fill="#2f7fd0" />
                <path d="M1 3h10v7H1z" fill="#184018" />
                <path d="M1.500 7.500l3-2 2.500 1.500L10.500 5" stroke="#72e04a" fill="none" />
              </svg>
              Testador de Estratégia
            </button>
          </div>
        </div>
      </div>
    </section>
  );
}

function StatusBar() {
  const cells = ["w-[73px]", "w-[53px]", "w-[53px]", "w-[50px]", "w-[52px]", "w-[49px]"];
  return (
    <footer className="flex h-[18px] items-center border-t border-[#c4c4c4]">
      <span className="flex-1 pl-px">Para Ajuda, pressione F1</span>
      <span className="h-3.5 w-[95px] border-l border-[#c4c4c4] pl-[3px] leading-[14px]">PERFIL PRINCIPAL</span>
      {cells.map((c, i) => (
        <span key={i} className={`h-3.5 border-l border-[#c4c4c4] ${c}`} />
      ))}
      <span className="flex h-3.5 w-[82px] items-center gap-0.5 border-l border-[#c4c4c4] pl-[3px]">
        <svg viewBox="0 0 13 12" className="h-3 w-[13px] shrink-0" aria-hidden="true">
          <path d="M1 1l6-.500v10L1 9.500z" fill="#3f9ce6" />
          <path d="M7 1.500h3.500V10H7z" fill="#8cc8f5" stroke="#2c7fcb" strokeWidth="0.600" />
          <circle cx="9.600" cy="8.500" r="3" fill="#55ad2f" />
          <path d="M8 8.500h3.200M9.600 7v3" stroke="#fff" />
        </svg>
        423 / 0 Mb
      </span>
      <svg viewBox="0 0 8 8" className="mt-auto mb-px h-2 w-2" fill="#bbb" aria-hidden="true">
        <path d="M6 0h1v1H6zM4 2h1v1H4zM6 2h1v1H6zM2 4h1v1H2zM4 4h1v1H4zM6 4h1v1H6zM0 6h1v1H0zM2 6h1v1H2zM4 6h1v1H4zM6 6h1v1H6z" />
      </svg>
    </footer>
  );
}

/* ---------- dialog ---------- */

const tree: [string, string, "app" | "coins" | "custom"][] = [
  ["MT5", "pl-1", "app"],
  ["BOVESPA", "pl-[19px]", "coins"],
  ["OPCOES", "pl-[35px]", "coins"],
  ["A VISTA", "pl-[35px]", "coins"],
  ["INDICES", "pl-[35px]", "coins"],
  ["FRACIONARIO", "pl-[35px]", "coins"],
  ["BMF", "pl-[19px]", "coins"],
  ["SERIES CONTINUAS", "pl-[35px]", "coins"],
  ["Custom", "pl-[19px]", "custom"],
];

function Tree() {
  return (
    <div className="relative w-[152px] border border-[#a5a9b2] bg-white pt-px">
      <svg viewBox="245 156 60 125" className="absolute top-0 left-0 h-[125px] w-[60px]" fill="none" aria-hidden="true">
        <path
          d="M255.500 170V270.500H264M255.500 177.500H264M255.500 244.500H264M271.500 184V230.500M271.500 190.500H280M271.500 204.500H280M271.500 217.500H280M271.500 230.500H280M271.500 250V257.500H280"
          stroke="#a0a0a0"
          strokeDasharray="1 1"
        />
        {[[255, 177], [255, 244], [271, 257]].map(([x, y]) => (
          <g key={`${x}-${y}`}>
            <rect x={x - 2.5} y={y - 2.5} width="6" height="6" fill="#fff" stroke="#999" />
            <path d={x === 271 ? `M${x - 1} ${y + 0.5}h3M${x + 0.5} ${y - 1}v3` : `M${x - 1} ${y + 0.5}h3`} stroke="#333" />
          </g>
        ))}
      </svg>
      <ul className="relative flex h-[121px] flex-col">
        {tree.map(([t, pl, ic]) => (
          <li key={t} className={`flex flex-1 items-center gap-1 ${pl}`}>
            {ic === "app" && <AppIcon size="size-3" />}
            {ic === "coins" && <Coins size="size-3" />}
            {ic === "custom" && <CustomIcon size="size-3" />}
            <span className={t === "BMF" ? "-mx-0.5 bg-[#f0f0f0] px-0.5" : ""}>{t}</span>
          </li>
        ))}
      </ul>
    </div>
  );
}

const symbols: [string, string, string][] = [
  ["WIN@D", "IBOVESPA MINI - Por Vencimento (WINQ...", ""],
  ["S1HW34", "THE SHERWIN DRN", ""],
  ["WEST3F", "WESTWING    ON     NM", ""],
  ["WEST3", "WESTWING    ON     NM", ""],
  ["S1HW34F", "THE SHERWIN DRN", ""],
  ["WINQ21", "IBOVESPA MINI", "2021.08.18"],
  ["WINV21", "IBOVESPA MINI", "2021.10.13"],
  ["WINZ21", "IBOVESPA MINI", "2021.12.15"],
];
const props: [string, string, "ab" | "01"][] = [
  ["ISIN", "BRBMEFWIN2T4", "ab"],
  ["Dígitos", "0", "01"],
  ["Tamanho de contrato", "1", "01"],
  ["Spread", "flutuante", "01"],
  ["Nível de Stops", "0", "01"],
  ["Margem da moeda", "BRL", "ab"],
];

function SymbolTable() {
  return (
    <div className="flex h-[135px] overflow-hidden border border-[#a5a9b2] bg-white">
      <table className="flex-1 table-fixed border-separate border-spacing-0">
        <colgroup>
          <col className="w-[98px]" />
          <col className="w-[162px]" />
          <col className="w-[66px]" />
        </colgroup>
        <thead>
          <tr className="h-[13px] leading-3">
            <th className="border-r border-b border-[#d8d8d8] p-0 pl-1 text-left font-normal">Ativo</th>
            <th className="border-r border-b border-[#d8d8d8] p-0 pl-[3px] text-left font-normal">Descrição</th>
            <th className="border-b border-[#d8d8d8] p-0 pr-1 text-right font-normal">Término Valid...</th>
          </tr>
        </thead>
        <tbody>
          {symbols.map(([s, d, e], i) => {
            const on = s === "WINQ21";
            return (
              <tr key={s} className={`h-[15px] leading-[14px] ${on ? "bg-[#3399ff] text-white" : i % 2 ? "bg-white" : "bg-[#ebebeb]"}`}>
                <td className="border-r border-b border-[#d0d0d0] p-0">
                  <span className="flex items-center gap-[3px] pl-0.5"><Dollar on={on} />{s}</span>
                </td>
                <td className="overflow-hidden border-r border-b border-[#d0d0d0] p-0 pl-0.5 whitespace-pre">{d}</td>
                <td className="border-b border-[#d0d0d0] p-0 pr-[3px] text-right">{e}</td>
              </tr>
            );
          })}
        </tbody>
      </table>
      <ScrollBar before="h-[25px]" thumb="h-[39px]" grip />
    </div>
  );
}

function PropTable() {
  return (
    <div className="flex h-[105px] overflow-hidden border border-[#a5a9b2] bg-white">
      <div className="flex-1">
        <h3 className="h-4 pl-[3px] leading-4 font-bold">WINQ21, BVMF.WINQ21, IBOVESPA MINI</h3>
        <table className="w-full table-fixed border-separate border-spacing-0">
          <colgroup>
            <col className="w-[130px]" />
            <col />
          </colgroup>
          <tbody>
            {props.map(([n, v, t], i) => (
              <tr key={n} className={i % 2 ? "h-[15px] bg-white leading-[14px]" : "h-[15px] bg-[#ebebeb] leading-[14px]"}>
                <td className="border-r border-b border-[#d0d0d0] p-0">
                  <span className="flex items-center gap-0.5 pl-0.5"><FileTag text={t} />{n}</span>
                </td>
                <td className="border-b border-[#d0d0d0] p-0 pr-[3px] text-right">{v}</td>
              </tr>
            ))}
          </tbody>
        </table>
      </div>
      <ScrollBar before="h-0" thumb="h-3" />
    </div>
  );
}

function Dialog() {
  const btn = "h-4 border border-[#9a9a9a] bg-[#dedede]";
  return (
    <div role="dialog" aria-label="Ativos" className="absolute top-[105px] left-[227px] flex w-[534px] flex-col border border-[#3d7f9c] bg-[#64c8e8] px-1 pb-1 font-[DejaVu_Sans_Condensed,sans-serif] text-[8px] text-[#1c1c1c]">
      <header className="flex h-[21px] items-start justify-between">
        <div className="w-[75px] pt-1 pl-[3px]"><Coins size="size-3" /></div>
        <h2 className="pt-px font-[Lato,sans-serif] text-[12px] leading-[18px]">Ativos</h2>
        <div className="flex h-4 border border-t-0 border-[#2f6f8b]">
          <button aria-label="Minimizar" className="flex w-5 items-center justify-center border-r border-[#2f6f8b]">
            <i className="mt-[3px] h-0.5 w-2 bg-black" />
          </button>
          <button aria-label="Maximizar" className="flex w-5 items-center justify-center">
            <i className="h-[5px] w-[7px] border border-[#2d6f87]" />
          </button>
          <button aria-label="Fechar janela" className="flex w-[34px] items-center justify-center bg-[#c75050]">
            <svg viewBox="0 0 7 7" className="size-[7px]" aria-hidden="true">
              <path d="M1 .500l5 6M6 .500l-5 6" stroke="#111" strokeWidth="1.600" />
            </svg>
          </button>
        </div>
      </header>
      <div className="flex flex-col border border-[#58aecb] bg-[#f0f0f0] px-1 pt-[5px] pb-[5px]">
        <div className="flex h-[15px] items-end">
          <button className="relative z-10 -mb-px h-4 w-[74px] border border-b-0 border-[#a0a4ac] bg-white">Especificação</button>
          <button className="h-3.5 w-[70px] border border-b-0 border-l-0 border-[#a0a4ac] bg-[#eaeaea]">Barras</button>
          <button className="h-3.5 w-[72px] border border-b-0 border-l-0 border-[#a0a4ac] bg-[#eaeaea]">Ticks</button>
        </div>
        <div className="flex gap-[6px] border border-[#a0a4ac] bg-white pt-[6px] pr-2 pb-[9px] pl-[6px]">
          <Tree />
          <div className="flex min-w-0 flex-1 flex-col">
            <div className="mb-[5px] flex h-[17px] items-center">
              <Binoculars />
              <input aria-label="Procurar ativo" defaultValue="win" className="ml-1 h-[17px] w-[167px] border border-[#8a8a8a] bg-white px-[3px] outline-none" />
              <label className="ml-[5px] flex items-center gap-[3px] whitespace-nowrap">
                <input type="checkbox" className="size-[9px] appearance-none border border-[#777] bg-white" />
                Exibir contratos expirados
              </label>
            </div>
            <SymbolTable />
            <div className="mt-1"><PropTable /></div>
          </div>
        </div>
        <div className="mt-[5px] flex gap-[5px]">
          <button className={`w-[110px] ${btn}`}>Exibir símbolo</button>
          <button className={`w-[110px] ${btn}`}>Ocultar símbolo</button>
          <button className={`w-[110px] ${btn}`}>Criar símbolo</button>
          <button className="mr-1 ml-auto h-4 w-[55px] border border-[#4f8fc4] bg-[#dedede]">OK</button>
        </div>
      </div>
    </div>
  );
}

/* ---------- annotations ---------- */

function Notes() {
  return (
    <div className="pointer-events-none absolute inset-0 font-[Lato,sans-serif] font-bold text-[#ed1c24]">
      <div className="absolute top-[95px] left-[205px] h-[375px] w-[607px] border-4 border-[#ed1c24]" />
      <div className="absolute top-[259px] left-[395px] h-[26px] w-[341px] border-4 border-[#ed1c24]" />
      <svg viewBox="450 145 60 38" className="absolute top-[145px] left-[450px] h-[38px] w-[60px]" fill="none" aria-hidden="true">
        <path d="M454 164L479 153v5H506v12.500H479v5z" stroke="#ed1c24" strokeWidth="3.500" />
      </svg>
      <svg viewBox="318 244 56 44" className="absolute top-[244px] left-[318px] h-[44px] w-[56px]" fill="none" aria-hidden="true">
        <path d="M368.500 265.500L346.500 252v7.500H323v14h23.500v7z" stroke="#ed1c24" strokeWidth="3.500" />
      </svg>
      <p className="absolute top-[149px] left-[526px] text-[17px] leading-[22px] whitespace-nowrap">DIGITE AS INICIAIS</p>
      <p className="absolute top-[284px] left-[256px] text-[17px] leading-6 whitespace-nowrap">
        CLIQUE 2 VEZES
        <br />
        PARA FICAR
        <br />
        AMARELO
      </p>
    </div>
  );
}

export default function App() {
  return (
    <div className="relative flex min-h-screen flex-col overflow-hidden border-x-2 border-b-2 border-[#3a3d40] bg-[#c3d5dc] font-[Lato,sans-serif] text-[9px] leading-[12px] text-[#222]">
      <div className="-mx-0.5 flex flex-1 flex-col pr-[6px] pb-[5px] pl-[7px]">
        <div className="flex h-[7px] shrink-0 items-start">
          <div className="ml-[2px] h-px w-2.5 bg-[#4aa3e0]" />
          <svg viewBox="577 0 96 2" className="ml-auto mr-[344px] h-0.5 w-24" aria-hidden="true">
            <path d="M579 .5h4M602 .5h2M646 .5h1M669 .5h2" stroke="#555" />
          </svg>
        </div>
        <div className="flex flex-1 flex-col bg-[#f0f0f0]">
          <MenuBar />
          <MainToolbar />
          <DrawToolbar />
          <TimeToolbar />
          <main className="flex h-[189px] border-t border-[#a0a0a0]">
            <MarketWatch />
            <Chart />
          </main>
          <Toolbox />
          <StatusBar />
        </div>
      </div>
      <div className="absolute inset-y-0 left-0 -ml-0.5 w-full">
        <Dialog />
        <Notes />
      </div>
    </div>
  );
}
